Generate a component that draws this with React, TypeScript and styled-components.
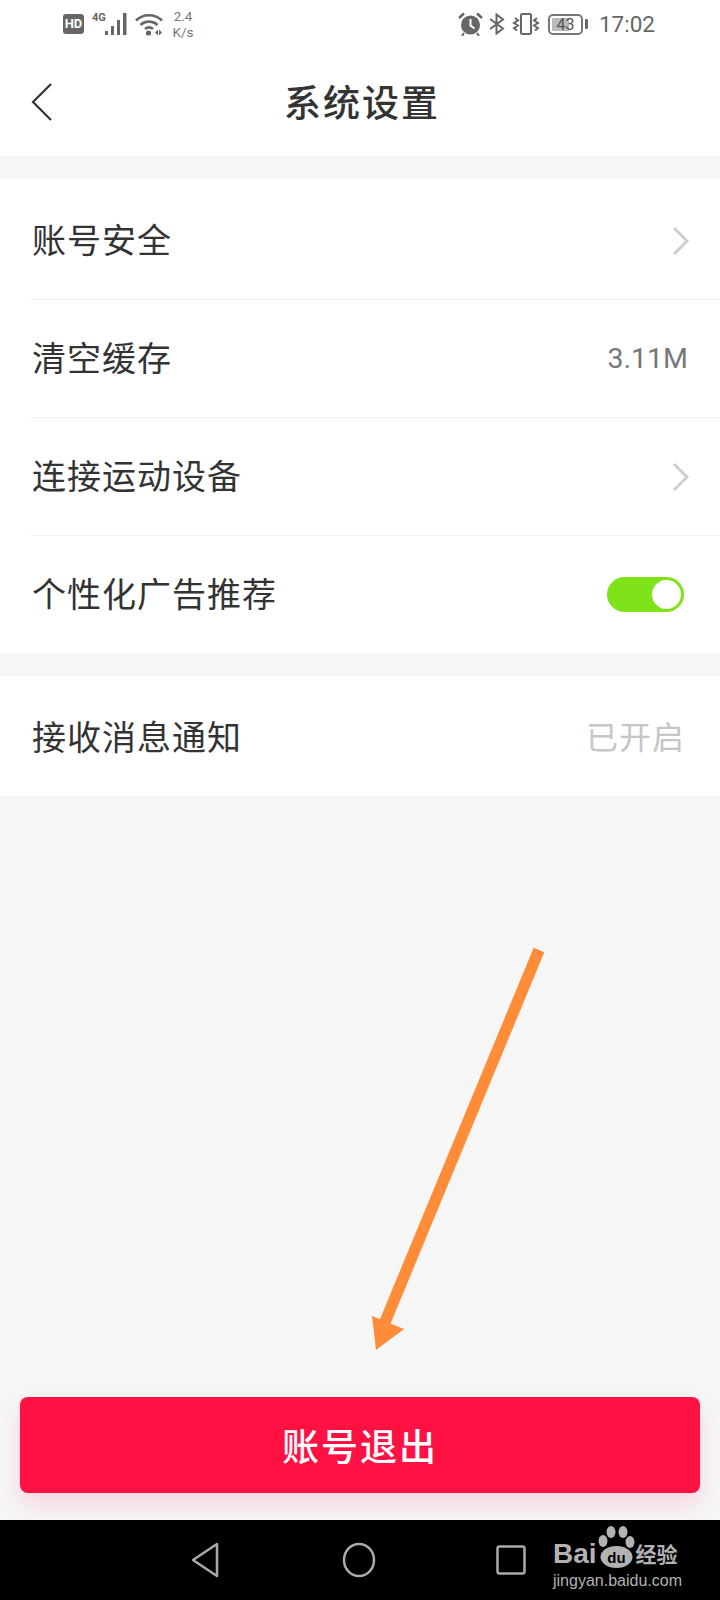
import * as React from 'react'
import styled, { createGlobalStyle } from 'styled-components'

const GlobalStyle = createGlobalStyle`
  html, body {
    margin: 0;
    padding: 0;
    background: #f6f6f6;
  }
  * {
    box-sizing: border-box;
  }
`

const Page = styled.div`
  position: relative;
  width: 720px;
  height: 1600px;
  display: flex;
  flex-direction: column;
  overflow: hidden;
  background: #f6f6f6;
  font-family: 'Noto Sans CJK SC', 'Noto Sans', sans-serif;
`

const StatusBar = styled.div`
  height: 48px;
  padding: 0 65px 0 63px;
  display: flex;
  align-items: center;
  justify-content: space-between;
  background: #fff;
  color: #666;
`

const StatusGroup = styled.div`
  display: flex;
  align-items: center;
`

const HdBadge = styled.span`
  width: 21px;
  height: 20px;
  border-radius: 3px;
  background: #666;
  color: #fff;
  font: bold 13px/20px 'Roboto', sans-serif;
  text-align: center;
`

const NetType = styled.span`
  width: 13px;
  margin: -13px 0 0 8px;
  font: bold 11px/10px 'Roboto', sans-serif;
`

const Speed = styled.span`
  width: 26px;
  margin-left: 7px;
  font: 13.5px/16px 'Roboto', sans-serif;
  text-align: center;
  color: #777;
`

const Clock = styled.span`
  margin-left: 11px;
  font: 22.5px/28px 'Roboto', sans-serif;
  color: #666;
`

const BatteryBody = styled.span`
  position: relative;
  width: 35px;
  height: 21px;
  margin-left: 8px;
  border: 2px solid #777;
  border-radius: 5px;
  font: 16px/17px 'Roboto', sans-serif;
  text-align: center;
  color: #555;
  &::before {
    content: '';
    position: absolute;
    inset: 2px 12px 2px 2px;
    background: #bbb;
    z-index: 0;
  }
`

const BatteryLevel = styled.span`
  position: relative;
`

const BatteryNib = styled.span`
  width: 3px;
  height: 10px;
  margin-left: 2px;
  border-radius: 1px;
  background: #666;
`

const Header = styled.header`
  height: 108px;
  position: relative;
  display: flex;
  align-items: center;
  justify-content: center;
  background: #fff;
`

const BackIcon = styled.svg`
  position: absolute;
  left: 30px;
  top: 34px;
`

const Title = styled.h1`
  margin: 0 0 2px 4px;
  font-size: 37px;
  font-weight: 500;
  line-height: 48px;
  letter-spacing: 2px;
  color: #333;
`

const Section = styled.section<{ $top?: number }>`
  margin-top: 23px;
  padding-top: ${({ $top }) => $top ?? 0}px;
  background: #fff;
`

const Row = styled.div<{ $height?: number; $last?: boolean }>`
  height: ${({ $height }) => $height ?? 118}px;
  margin-left: 30px;
  padding: 0 30px 0 2px;
  display: flex;
  align-items: center;
  justify-content: space-between;
  border-bottom: ${({ $last }) => ($last ? 'none' : '1px solid #f3f3f3')};
`

const RowLabel = styled.span<{ $centered?: boolean }>`
  margin-top: ${({ $centered }) => ($centered ? 0 : -4)}px;
  font-size: 34px;
  line-height: 44px;
  letter-spacing: 1px;
  color: #333;
`

const RowValue = styled.span<{ $muted?: boolean }>`
  margin-top: ${({ $muted }) => ($muted ? -2 : 0)}px;
  margin-right: ${({ $muted }) => ($muted ? 5 : 2)}px;
  font-family: ${({ $muted }) =>
    $muted ? `'Noto Sans CJK SC', sans-serif` : `'Roboto', sans-serif`};
  font-size: ${({ $muted }) => ($muted ? 32 : 28.5)}px;
  letter-spacing: ${({ $muted }) => ($muted ? 1 : 0)}px;
  line-height: 40px;
  color: ${({ $muted }) => ($muted ? '#c6c6c6' : '#777')};
`

const Toggle = styled.span`
  width: 77px;
  height: 35px;
  margin-right: 6px;
  padding: 3px;
  display: flex;
  justify-content: flex-end;
  border-radius: 18px;
  background: #7fe31a;
`

const ToggleKnob = styled.span`
  width: 29px;
  height: 29px;
  border-radius: 50%;
  background: #fff;
`

const Spacer = styled.main`
  flex: 1;
  padding: 0 20px 27px;
  display: flex;
  align-items: flex-end;
`

const LogoutButton = styled.button`
  width: 100%;
  height: 96px;
  border: none;
  border-radius: 8px;
  background: #ff1144;
  box-shadow: 0 12px 24px rgba(255, 17, 68, 0.14);
  color: #fff;
  font-family: inherit;
  font-size: 37px;
  font-weight: 500;
  letter-spacing: 2px;
`

const NavBar = styled.nav`
  position: relative;
  height: 80px;
  padding-left: 190px;
  display: flex;
  align-items: center;
  background: #000;
`

const NavIcon = styled.svg<{ $left?: number }>`
  display: block;
  margin-left: ${({ $left }) => $left ?? 0}px;
`

const Pointer = styled.svg`
  position: absolute;
  left: 360px;
  top: 940px;
`

const Watermark = styled.div`
  position: absolute;
  left: 553px;
  top: 3px;
  width: 130px;
  color: #b2b2b2;
`

const BrandLine = styled.div`
  height: 44px;
  display: flex;
  align-items: flex-end;
`

const BrandWord = styled.span`
  font: bold 28px/26px 'Liberation Sans', sans-serif;
`

const BrandCn = styled.span`
  margin-left: 1px;
  font-size: 21px;
  font-weight: 700;
  line-height: 28px;
  white-space: nowrap;
`

const BrandUrl = styled.div`
  margin-top: 4px;
  font: 16px/20px 'Liberation Sans', sans-serif;
  white-space: nowrap;
`

const PawIcon = styled.svg`
  margin: 0 0 -1px 1px;
  flex: none;
`

const PawText = styled.text`
  font: bold 15px 'Liberation Sans', sans-serif;
  fill: #000;
`

const Chevron = () => (
  <svg width="18" height="30" viewBox="0 0 18 30">
    <path d="M2 2l13 13L2 28" fill="none" stroke="#cfcfcf" strokeWidth="3" />
  </svg>
)

const App: React.FunctionComponent = () => {
  return (
    <Page>
      <GlobalStyle />
      <StatusBar>
        <StatusGroup>
          <HdBadge>HD</HdBadge>
          <NetType>4G</NetType>
          <svg width="24" height="24" viewBox="0 0 24 24" fill="#666">
            <rect x="0" y="19" width="3" height="4" />
            <rect x="6" y="14" width="3" height="9" />
            <rect x="12" y="8" width="3" height="15" />
            <rect x="18" y="1" width="3.5" height="22" />
          </svg>
          <svg
            width="28"
            height="24"
            viewBox="0 0 28 24"
            style={{ marginLeft: 6 }}
          >
            <g fill="none" stroke="#666" strokeWidth="2.6">
              <path d="M1 8.5c7-7 19-7 26 0" />
              <path d="M5.500 13c4.500-4.500 12.500-4.500 17 0" />
              <path d="M10 17c2.500-2 5.500-2 8 0" />
            </g>
            <circle cx="13.500" cy="21" r="2.600" fill="#666" />
            <path d="M20 20.500l3-3v6zM24 17.500l3 3-3 3z" fill="#666" />
          </svg>
          <Speed>
            2.4
            <br />
            K/s
          </Speed>
        </StatusGroup>
        <StatusGroup>
          <svg width="25" height="24" viewBox="0 0 25 24">
            <circle cx="12.500" cy="13" r="9.500" fill="#666" />
            <path d="M12.500 7v6.500l4 3" fill="none" stroke="#fff" strokeWidth="2" />
            <path d="M1 6l5-4.500M24 6l-5-4.500" stroke="#666" strokeWidth="2.500" />
            <path d="M6 21l-2 3M19 21l2 3" stroke="#666" strokeWidth="2" />
          </svg>
          <svg
            width="16"
            height="22"
            viewBox="0 0 16 22"
            style={{ marginLeft: 6 }}
          >
            <path
              d="M1 6l13 9.500-6.500 5V1.500l6.500 5L1 16"
              fill="none"
              stroke="#666"
              strokeWidth="2"
            />
          </svg>
          <svg
            width="28"
            height="22"
            viewBox="0 0 28 22"
            style={{ marginLeft: 7 }}
          >
            <rect
              x="9"
              y="1"
              width="10"
              height="20"
              rx="1.500"
              fill="none"
              stroke="#666"
              strokeWidth="2"
            />
            <path
              d="M3 5l3 2.500L2 10l4 2.500L2 15l3 2.500M25 5l-3 2.500L26 10l-4 2.500L26 15l-3 2.500"
              fill="none"
              stroke="#666"
              strokeWidth="2"
            />
          </svg>
          <BatteryBody>
            <BatteryLevel>43</BatteryLevel>
          </BatteryBody>
          <BatteryNib />
          <Clock>17:02</Clock>
        </StatusGroup>
      </StatusBar>

      <Header>
        <BackIcon width="24" height="40" viewBox="0 0 24 40">
          <path d="M21 2L3 20l18 18" fill="none" stroke="#333" strokeWidth="2.200" />
        </BackIcon>
        <Title>系统设置</Title>
      </Header>

      <Section $top={3}>
        <Row>
          <RowLabel>账号安全</RowLabel>
          <Chevron />
        </Row>
        <Row>
          <RowLabel>清空缓存</RowLabel>
          <RowValue>3.11M</RowValue>
        </Row>
        <Row>
          <RowLabel>连接运动设备</RowLabel>
          <Chevron />
        </Row>
        <Row $height={117} $last>
          <RowLabel>个性化广告推荐</RowLabel>
          <Toggle>
            <ToggleKnob />
          </Toggle>
        </Row>
      </Section>

      <Section>
        <Row $height={120} $last>
          <RowLabel $centered>接收消息通知</RowLabel>
          <RowValue $muted>已开启</RowValue>
        </Row>
      </Section>

      <Spacer>
        <LogoutButton>账号退出</LogoutButton>
      </Spacer>

      <NavBar>
        <NavIcon width="30" height="36" viewBox="0 0 30 36">
          <path
            d="M27 2v32L3 18z"
            fill="none"
            stroke="#aaa"
            strokeWidth="2.500"
            strokeLinejoin="round"
          />
        </NavIcon>
        <NavIcon width="34" height="36" viewBox="0 0 34 36" $left={122}>
          <ellipse
            cx="17"
            cy="18"
            rx="15"
            ry="16"
            fill="none"
            stroke="#aaa"
            strokeWidth="2.500"
          />
        </NavIcon>
        <NavIcon width="30" height="30" viewBox="0 0 30 30" $left={120}>
          <rect
            x="1.500"
            y="1.500"
            width="27"
            height="27"
            rx="2"
            fill="none"
            stroke="#aaa"
            strokeWidth="2.500"
          />
        </NavIcon>
        <Watermark>
          <BrandLine>
            <BrandWord>Bai</BrandWord>
            <PawIcon width="37" height="42" viewBox="0 0 37 42">
              <g fill="#b2b2b2">
                <ellipse cx="5" cy="15" rx="4.500" ry="6" />
                <ellipse cx="13" cy="6" rx="4.500" ry="6" />
                <ellipse cx="25" cy="6" rx="4.500" ry="6" />
                <ellipse cx="32" cy="16" rx="4.500" ry="6" />
                <ellipse cx="18.500" cy="31" rx="16" ry="11" />
              </g>
              <PawText x="18.500" y="37" textAnchor="middle">
                du
              </PawText>
            </PawIcon>
            <BrandCn>经验</BrandCn>
          </BrandLine>
          <BrandUrl>jingyan.baidu.com</BrandUrl>
        </Watermark>
      </NavBar>

      <Pointer width="190" height="420" viewBox="0 0 190 420">
        <path d="M179 10L25 382" stroke="#ff8c38" strokeWidth="11.500" />
        <path d="M12 376l32 13-28 21z" fill="#ff8c38" />
      </Pointer>
    </Page>
  )
}

export default App
